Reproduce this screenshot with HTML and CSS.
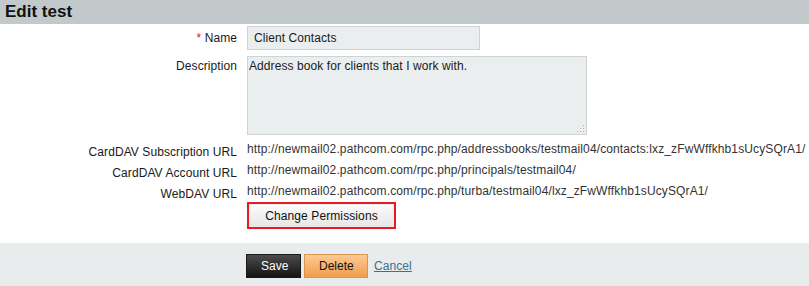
FILE: index.html
```html
<!DOCTYPE html>
<html>
<head>
<meta charset="utf-8">
<link rel="stylesheet" href="styles.css">
</head>
<body>
<div class="header"><h1 class="title">Edit test</h1></div>
<form class="form">
  <div class="row row-name">
    <label class="label label-mid"><span class="req">*</span> Name</label>
    <input class="input" type="text" value="Client Contacts">
  </div>
  <div class="row row-desc">
    <label class="label label-top">Description</label>
    <div class="ta-wrap">
      <textarea class="textarea">Address book for clients that I work with.</textarea>
      <svg class="grip" width="10" height="10" viewBox="0 0 10 10"><g fill="#a9aeb0"><rect x="8" y="2" width="1" height="1"/><rect x="5" y="5" width="1" height="1"/><rect x="8" y="5" width="1" height="1"/><rect x="2" y="8" width="1" height="1"/><rect x="5" y="8" width="1" height="1"/><rect x="8" y="8" width="1" height="1"/></g></svg>
    </div>
  </div>
  <div class="urls">
    <div class="row row-url">
      <span class="label label-url">CardDAV Subscription URL</span>
      <span class="url">http://newmail02.pathcom.com/rpc.php/addressbooks/testmail04/contacts:lxz_zFwWffkhb1sUcySQrA1/</span>
    </div>
    <div class="row row-url">
      <span class="label label-url">CardDAV Account URL</span>
      <span class="url">http://newmail02.pathcom.com/rpc.php/principals/testmail04/</span>
    </div>
    <div class="row row-url">
      <span class="label label-url">WebDAV URL</span>
      <span class="url">http://newmail02.pathcom.com/rpc.php/turba/testmail04/lxz_zFwWffkhb1sUcySQrA1/</span>
    </div>
  </div>
  <div class="row row-perm">
    <span class="label"></span>
    <span class="highlight"><button type="button" class="btn-perm">Change Permissions</button></span>
  </div>
</form>
<div class="footer">
  <button type="button" class="btn btn-save">Save</button>
  <button type="button" class="btn btn-delete">Delete</button>
  <a class="cancel" href="#">Cancel</a>
</div>
</body>
</html>
```
FILE: styles.css
```css
html, body {
  margin: 0;
  padding: 0;
  background: #fff;
}
body {
  font-family: "Liberation Sans", Arial, sans-serif;
  font-size: 12px;
  line-height: 14px;
  color: #222;
}
.header {
  background: #c1c9cb;
  height: 24px;
  display: flex;
  align-items: center;
  padding-left: 5px;
}
.title {
  margin: 0;
  font-size: 17px;
  line-height: 20px;
  font-weight: bold;
  color: #111;
}
.form {
  margin: 0;
  padding: 2px 0 14px 0;
}
.row {
  display: flex;
  column-gap: 10px;
}
.label {
  width: 237px;
  flex: none;
  text-align: right;
  color: #1a1a1a;
  letter-spacing: 0.08px;
}
.label-mid {
  align-self: center;
}
.label-top {
  padding-top: 3px;
}
.req {
  color: #e0141e;
}
.input {
  box-sizing: border-box;
  width: 233px;
  height: 24px;
  margin: 0;
  padding: 0 6px;
  border: 1px solid #cfd3d4;
  background: #eaeeef;
  font-family: inherit;
  font-size: 12px;
  letter-spacing: 0.08px;
  color: #1a1a1a;
  outline: none;
}
.row-desc {
  margin-top: 6px;
}
.ta-wrap {
  position: relative;
  width: 340px;
  height: 79px;
}
.textarea {
  box-sizing: border-box;
  display: block;
  width: 340px;
  height: 79px;
  margin: 0;
  padding: 2px 1px;
  border: 1px solid #cfd3d4;
  background: #eaeeef;
  font-family: inherit;
  font-size: 12px;
  line-height: 14px;
  letter-spacing: 0.08px;
  color: #1a1a1a;
  resize: none;
  outline: none;
}
.grip {
  position: absolute;
  right: 2px;
  bottom: 2px;
}
.urls {
  margin-top: 7px;
  display: flex;
  flex-direction: column;
  row-gap: 4px;
}
.label-url {
  padding-top: 3px;
}
.url {
  color: #333;
  white-space: nowrap;
  letter-spacing: 0.125px;
}
.row-perm {
  margin-top: 1px;
}
.highlight {
  display: inline-flex;
  border: 2px solid #e31b23;
}
.btn-perm {
  box-sizing: border-box;
  width: 145px;
  height: 23px;
  margin: 0;
  padding: 0;
  border: 1px solid #ececec;
  background: linear-gradient(#fbfbfb, #e6e6e6);
  font-family: inherit;
  font-size: 12px;
  letter-spacing: 0.1px;
  color: #111;
}
.footer {
  background: #e9eced;
  height: 43px;
  box-sizing: border-box;
  padding: 11px 0 0 246px;
  display: flex;
  align-items: flex-start;
}
.btn {
  box-sizing: border-box;
  height: 24px;
  margin: 0;
  padding: 0 14px;
  font-family: inherit;
  font-size: 12px;
}
.btn-save {
  width: 55px;
  border: 1px solid #1a1a1a;
  background: linear-gradient(#4b4b4b, #141414);
  color: #fff;
}
.btn-delete {
  width: 64px;
  margin-left: 3px;
  border: 1px solid #dc9550;
  background: linear-gradient(#fcc993, #f19d4d);
  color: #111;
}
.cancel {
  margin-left: 6px;
  margin-top: 5px;
  color: #3b6e8f;
  text-decoration: underline;
  letter-spacing: 0.08px;
}
```
